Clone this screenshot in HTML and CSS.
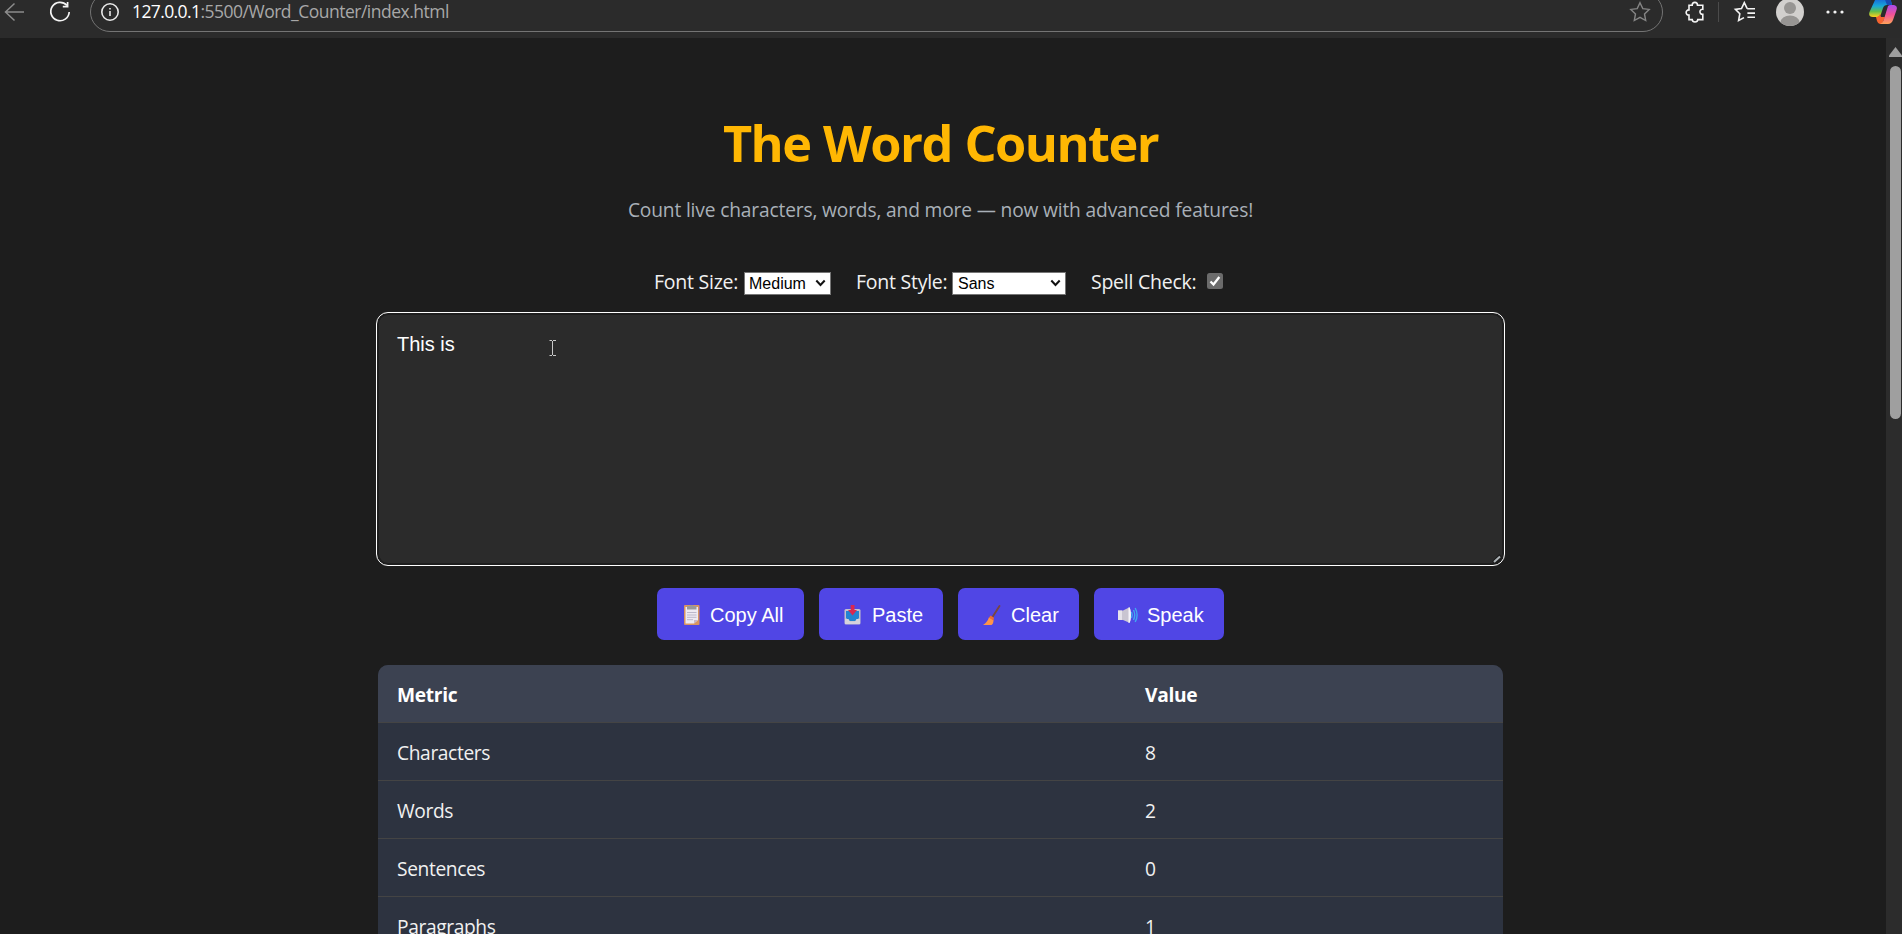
FILE: index.html
```
<!DOCTYPE html>
<html lang="en">
<head>
<meta charset="utf-8">
<title>The Word Counter</title>
<link rel="stylesheet" href="styles.css">
</head>
<body>
<header class="toolbar">
  <svg class="nav-icon back" viewBox="0 0 22 20"><path d="M20 10H1.5M10.5 1.5L1.5 10L10.5 18.5"/></svg>
  <svg class="nav-icon reload" viewBox="0 0 22 22"><path d="M17.8 4.3A9.2 9.2 0 1 0 20.2 11M18.6 1V5.6H13.8"/></svg>
  <div class="address">
    <svg class="info" viewBox="0 0 20 20"><circle cx="10" cy="10" r="8.2"/><path d="M10 9v5M10 6v1.6"/></svg>
    <span class="url"><span class="host">127.0.0.1</span><span class="path">:5500/Word_Counter/index.html</span></span>
    <svg class="star" viewBox="0 0 22 22"><path d="M11 1.7L13.8 7.6L20.2 8.4L15.5 12.9L16.7 19.5L11 16.3L5.3 19.5L6.5 12.9L1.8 8.4L8.2 7.6Z"/></svg>
  </div>
  <svg class="puzzle" viewBox="0 0 20 22"><path d="M4 4.2H7.2C7.2 .4 12.5 .4 12.5 4.2H17.8V8.3C14 7.8 14 13.8 17.8 13.3V18.6H12.8C12.5 21.7 7.5 21.7 7.2 18.6H4V14C.2 14.3 .2 8.8 4 8.9Z"/></svg>
  <span class="divider"></span>
  <svg class="favorites" viewBox="0 0 22 22"><path d="M13.2 7.6L10.3 1.6L7.5 7.6L1.4 8.4L5.8 12.8L4.6 19.5L10 16.6M13.2 7.8H21M13.4 12.1H21M13.4 16.3H21"/></svg>
  <svg class="avatar" viewBox="0 0 28 28"><defs><clipPath id="face"><circle cx="14" cy="14" r="14"/></clipPath></defs><circle cx="14" cy="14" r="14" fill="#d2d0ce"/><g clip-path="url(#face)" fill="#979593"><circle cx="14" cy="10" r="6"/><ellipse cx="14" cy="24.5" rx="9.5" ry="7"/></g></svg>
  <svg class="more" viewBox="0 0 18 4"><circle cx="2" cy="2" r="1.6"/><circle cx="9" cy="2" r="1.6"/><circle cx="16" cy="2" r="1.6"/></svg>
  <svg class="copilot" viewBox="0 0 28 28">
    <defs>
      <linearGradient id="cool" x1="0" y1="0" x2="0" y2="1"><stop offset=".1" stop-color="#1768d8"/><stop offset=".45" stop-color="#18a8d8"/><stop offset=".72" stop-color="#62bd4d"/><stop offset="1" stop-color="#ffd21c"/></linearGradient>
      <linearGradient id="warm" x1="0" y1="0" x2="0" y2="1"><stop offset="0" stop-color="#a94bea"/><stop offset=".5" stop-color="#ef5298"/><stop offset="1" stop-color="#ffa258"/></linearGradient>
    </defs>
    <path d="M6 3Q7 0 10 0H18Q21 0 22 4L23 8H18Q15 8 14 11L12 17Q11 20 8 20H4Q-1 20 .5 15Z" fill="url(#cool)"/>
    <path d="M15 0H18Q21 0 22 4L23 8H18Z" fill="#174bb4"/>
    <path d="M7 20Q10 20 11 17L12 20H16L13 27H11Q9 27 8 24Z" fill="#f4632f"/>
    <path d="M19 9Q20 8 22 8H25Q29 9 27.5 13L24 23Q22.500 27 19 27H11Q14 26 15 22Z" fill="url(#warm)"/>
  </svg>
</header>

<div class="viewport">
  <main class="page">
    <h1 class="title"><span class="title-text">The Word Counter</span></h1>
    <p class="subtitle"><span class="subtitle-text">Count live characters, words, and more — now with advanced features!</span></p>

    <div class="controls">
      <div class="control size"><span class="label">Font Size:</span><span class="select"><span>Medium</span><svg class="chevron" viewBox="0 0 10 8"><path d="M.8 1.500L5 6L9.200 1.500"/></svg></span></div>
      <div class="control family"><span class="label">Font Style:</span><span class="select"><span>Sans</span><svg class="chevron" viewBox="0 0 10 8"><path d="M.8 1.500L5 6L9.200 1.500"/></svg></span></div>
      <div class="control spell"><span class="label">Spell Check:</span><svg class="checkbox" viewBox="0 0 16 16"><rect width="16" height="16" rx="2.500" fill="#6b6b6b"/><path d="M3.500 8.500L6.500 11.500L12.300 4" fill="none" stroke="#fff" stroke-width="2.300"/></svg></div>
    </div>

    <div class="editor">
      <span class="typed">This is</span>
      <svg class="caret" viewBox="0 0 8 16"><path d="M.5 .5H3M4 .5H7M3.500 1V15M.5 15.500H3M4 15.500H7"/></svg>
      <svg class="grip" viewBox="0 0 10 10"><path d="M0 7.500L7.500 0L10 3L3.500 10Z" fill="#1b1b1b"/><path d="M2 8L8 2.500" stroke="#aeb4b8" stroke-width="2"/></svg>
    </div>

    <div class="actions">
      <div class="button copy"><svg class="emoji" viewBox="0 0 20 20"><rect x="2" y="0" width="15.500" height="20" rx="1" fill="#d99460"/><path d="M3.500 2H16V15L12 18.500H3.500Z" fill="#eeeaf2"/><path d="M12 18.500V15H16Z" fill="#c9b9c8"/><path d="M5 1H7.500Q9.800-1 12 1H14.500V4.500H5Z" fill="#999"/><path d="M5 7.500H14.500M5 10H14.500M5 12.300H14.500M5 14.700H11" stroke="#bcb8cb"/></svg><span>Copy All</span></div>
      <div class="button paste"><svg class="emoji" viewBox="0 0 20 20"><rect x="1.500" y="4" width="16" height="15.500" rx="1.500" fill="#c4c0cc"/><path d="M3 6H16V13L13 16H6L3 13Z" fill="#2383d2"/><path d="M2 14H5.500L7 16.500H12L13.500 14H17V19H2Z" fill="#d6d2dc"/><path d="M7.700 0H11.500V5H14L9.600 10.500L5 5H7.700Z" fill="#da2850"/></svg><span>Paste</span></div>
      <div class="button clear"><svg class="emoji" viewBox="0 0 20 20"><path d="M17.500 1L10.500 12" stroke="#794640" stroke-width="1.900" stroke-linecap="round"/><path d="M7 12.200L11.500 15Q11.500 19 9.500 20H1Q5.500 17 7 12.200Z" fill="#ff9448"/><path d="M8.500 10.500L12 12.800L11.500 15.500L7 12.700Z" fill="#ec6c37"/></svg><span>Clear</span></div>
      <div class="button speak"><svg class="emoji" viewBox="0 0 20 20"><path d="M0 5.500H5L12 2V18L5 15H0Z" fill="#c9c5d1"/><path d="M0 5.500H4V15H0Z" fill="#e6e3eb"/><path d="M10.500 2.500Q13 2 13 10T10.500 18Z" fill="#f6f4fa"/><path d="M13.500 7Q15 10 13.500 13M15.500 5Q18 10 15.500 15M17.200 3Q21 10 17.200 17" fill="none" stroke="#3fa9f2" stroke-width="1.400"/></svg><span>Speak</span></div>
    </div>

    <div class="metrics">
      <div class="row head"><span>Metric</span><span>Value</span></div>
      <div class="row"><span>Characters</span><span>8</span></div>
      <div class="row"><span>Words</span><span>2</span></div>
      <div class="row"><span>Sentences</span><span>0</span></div>
      <div class="row"><span>Paragraphs</span><span>1</span></div>
    </div>
  </main>
  <aside class="scrollbar">
    <svg class="arrow" viewBox="0 0 13 10"><path d="M6.500 0L13 8.500V10H0V8.500Z"/></svg>
    <span class="thumb"></span>
  </aside>
</div>
</body>
</html>
```
FILE: styles.css
```
* { box-sizing: border-box; }
body {
  margin: 0;
  width: 1902px;
  height: 934px;
  overflow: hidden;
  background: #1d1d1d;
  color: #f1f1f1;
  font-family: "Open Sans", "Noto Sans", sans-serif;
}
svg { display: block; flex: none; overflow: visible; }

.toolbar {
  display: flex;
  align-items: flex-start;
  height: 38px;
  background: #2b2b2b;
  overflow: hidden;
}
.nav-icon { fill: none; stroke-width: 1.5; }
.back { width: 22px; height: 20px; margin: 2px 0 0 4px; stroke: #8c8c8c; }
.reload { width: 22px; height: 22px; margin: 1px 0 0 23px; stroke: #f4f4f4; stroke-width: 1.7; }
.address {
  display: flex;
  align-items: center;
  width: 1573px;
  height: 40px;
  margin: -8px 0 0 19px;
  padding: 0 11px 0 9px;
  border: 1px solid #747474;
  border-radius: 20px;
}
.info { width: 20px; height: 20px; fill: none; stroke: #e8e8e8; stroke-width: 1.6; }
.url { margin: -3px auto 0 12px; font-size: 17.5px; line-height: 24px; white-space: nowrap; }
.host { color: #fff; letter-spacing: -0.6px; }
.path { color: #a8a8a8; letter-spacing: -0.5px; }
.star { width: 22px; height: 22px; fill: none; stroke: #858585; stroke-width: 1.4; }
.puzzle { width: 20px; height: 22px; margin: 1px 0 0 22px; fill: none; stroke: #f4f4f4; stroke-width: 1.6; }
.divider { width: 1px; height: 20px; margin: 2px 0 0 13px; background: #4b4b4b; }
.favorites { width: 22px; height: 22px; margin: 1px 0 0 15px; fill: none; stroke: #f4f4f4; stroke-width: 1.6; }
.avatar { width: 28px; height: 28px; margin: -2px 0 0 20px; }
.more { width: 18px; height: 4px; margin: 10px 0 0 22px; fill: #f4f4f4; }
.copilot { width: 28px; height: 28px; margin: -3px 0 0 25px; }

.viewport { display: flex; height: 896px; }
.page {
  display: flex;
  flex-direction: column;
  align-items: center;
  width: 1886px;
  padding: 70px 5px 0 0;
  overflow: hidden;
}
.page > * { flex-shrink: 0; }
.title { margin: 0; height: 72px; font-size: 50.5px; line-height: 70px; font-weight: 700; color: #ffb703; white-space: nowrap; }
.title-text { letter-spacing: -1.55px; word-spacing: 1px; }
.subtitle { margin: 16px 0 0; height: 28px; font-size: 19.2px; line-height: 28px; color: #a9b0b8; white-space: nowrap; }
.subtitle-text { letter-spacing: -0.16px; }

.controls { display: flex; align-items: center; width: 573px; height: 30px; margin-top: 44px; }
.control { display: flex; align-items: center; }
.size { width: 202px; }
.family { width: 235px; }
.label { font-size: 19.5px; line-height: 28px; letter-spacing: -0.25px; white-space: nowrap; margin-top: -2px; }
.size .label { width: 90px; }
.family .label { width: 96px; }
.spell .label { width: 116px; }
.select {
  display: flex;
  justify-content: space-between;
  align-items: center;
  width: 87px;
  height: 23px;
  padding: 0 4px 0 4px;
  border: 1px solid #767676;
  background: #fff;
  color: #000;
  font: 16px/21px "Liberation Sans", Arial, sans-serif;
}
.family .select { width: 114px; padding-left: 5px; }
.chevron { width: 11px; height: 8px; fill: none; stroke: #111; stroke-width: 2; }
.checkbox { width: 16px; height: 16px; margin-top: -5px; }

.editor {
  position: relative;
  width: 1129px;
  height: 254px;
  margin-top: 14px;
  padding: 19px 20px;
  border: 1px solid #fff;
  border-radius: 12px;
  background: #2b2b2b;
  box-shadow: inset 0 0 0 2px #1e1e1e;
}
.typed { font: 20px/24px "Liberation Sans", Arial, sans-serif; color: #fff; }
.caret { position: absolute; left: 172px; top: 27px; width: 8px; height: 16px; fill: none; stroke: #c8c8c8; stroke-width: 1; }
.grip { position: absolute; right: 2px; bottom: 1px; width: 10px; height: 10px; }

.actions { display: flex; gap: 15px; margin-top: 22px; }
.button {
  display: flex;
  align-items: center;
  height: 52px;
  padding: 2px 0 0 24px;
  border-radius: 7px;
  background: #5046e5;
  color: #fff;
  font: 20px/24px "Liberation Sans", Arial, sans-serif;
  white-space: nowrap;
}
.emoji { width: 20px; height: 20px; margin: 0 9px 0 0; }
.copy { width: 147px; padding-left: 25px; }
.copy .emoji { margin-right: 8px; }
.paste { width: 124px; }
.clear { width: 121px; }
.speak { width: 130px; }

.metrics { width: 1125px; margin: 25px 0 0; border-radius: 10px 10px 0 0; background: #2d3340; overflow: hidden; }
.row {
  display: grid;
  grid-template-columns: 748px 1fr;
  height: 58px;
  padding: 16px 19px 0;
  border-bottom: 1px solid #444;
  font-size: 19.2px;
  line-height: 28px;
  letter-spacing: -0.38px;
}
.head { background: #3c4251; color: #fff; font-weight: 700; letter-spacing: -0.3px; }

.scrollbar { display: flex; flex-direction: column; align-items: flex-end; width: 16px; padding: 9px 1px 0 0; background: #2c2c2c; }
.arrow { width: 13px; height: 10px; margin-right: -1px; fill: #9f9f9f; }
.thumb { width: 11px; height: 353px; margin-top: 9px; border-radius: 5.5px; background: #9f9f9f; }
```
